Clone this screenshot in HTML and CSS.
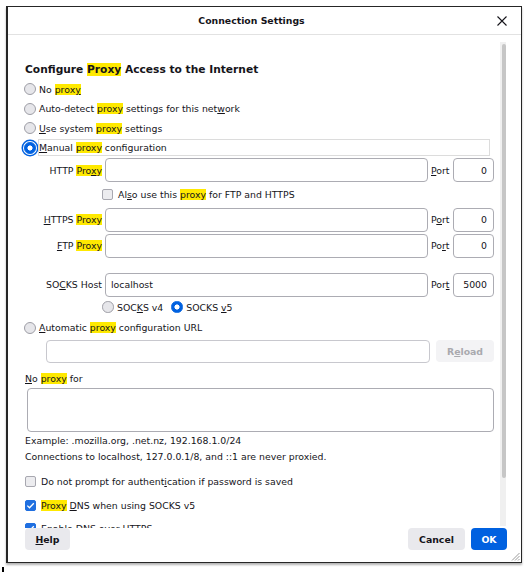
FILE: index.html
```html
<!DOCTYPE html>
<html>
<head>
<meta charset="utf-8">
<link rel="stylesheet" href="styles.css">
</head>
<body>
<div class="dialog">
  <div class="titlebar">
    <div class="title">Connection Settings</div>
    <div class="close"><svg width="10" height="10" viewBox="0 0 10 10"><path d="M0.5 0.5L9.5 9.5M9.5 0.5L0.5 9.5" stroke="#15141a" stroke-width="1.1" fill="none"/></svg></div>
  </div>
  <div class="body">
    <div class="scroll">
      <h1 class="heading">Configure <mark>Proxy</mark> Access to the Internet</h1>
      <div class="opt first"><span class="radio"></span><span>No <mark>prox<u>y</u></mark></span></div>
      <div class="opt"><span class="radio"></span><span>Auto-detect <mark>proxy</mark> settings for this net<u>w</u>ork</span></div>
      <div class="opt"><span class="radio"></span><span><u>U</u>se system <mark>proxy</mark> settings</span></div>
      <div class="opt"><span class="radio checked focus"></span><span class="focusbox"><span><u>M</u>anual <mark>proxy</mark> configuration</span></span></div>

      <div class="field">
        <span class="flabel">HTTP <mark>Pro<u>x</u>y</mark></span>
        <span class="input"></span>
        <span class="plabel"><u>P</u>ort</span>
        <span class="port">0</span>
      </div>
      <div class="subcheck"><span class="check"></span><span>Al<u>s</u>o use this <mark>proxy</mark> for FTP and HTTPS</span></div>
      <div class="field">
        <span class="flabel"><u>H</u>TTPS <mark>Proxy</mark></span>
        <span class="input"></span>
        <span class="plabel">P<u>o</u>rt</span>
        <span class="port">0</span>
      </div>
      <div class="field gap2">
        <span class="flabel"><u>F</u>TP <mark>Proxy</mark></span>
        <span class="input"></span>
        <span class="plabel">Po<u>r</u>t</span>
        <span class="port">0</span>
      </div>
      <div class="field gap15">
        <span class="flabel">SO<u>C</u>KS Host</span>
        <span class="input filled">localhost</span>
        <span class="plabel">Por<u>t</u></span>
        <span class="port">5000</span>
      </div>
      <div class="socksver">
        <span class="radio small"></span><span class="v4">SOC<u>K</u>S v4</span>
        <span class="radio small checked"></span><span>SOCKS <u>v</u>5</span>
      </div>
      <div class="opt auto"><span class="radio"></span><span><u>A</u>utomatic <mark>proxy</mark> configuration URL</span></div>
      <div class="urlrow">
        <span class="urlinput"></span>
        <span class="reload">R<u>e</u>load</span>
      </div>
      <div class="line noproxy"><u>N</u>o <mark>proxy</mark> for</div>
      <div class="textarea"></div>
      <div class="line small2">Example: .mozilla.org, .net.nz, 192.168.1.0/24</div>
      <div class="line small2">Connections to localhost, 127.0.0.1/8, and ::1 are never proxied.</div>
      <div class="cb first-cb"><span class="check"></span><span>Do not prompt for authent<u>i</u>cation if password is saved</span></div>
      <div class="cb"><span class="check on"><svg width="11" height="11" viewBox="0 0 11 11"><path d="M2.3 5.6L4.5 7.8L8.8 3.2" stroke="#fff" stroke-width="1.3" fill="none"/></svg></span><span><mark>Proxy</mark> <u>D</u>NS when using SOCKS v5</span></div>
      <div class="cb last-cb"><span class="check on"><svg width="11" height="11" viewBox="0 0 11 11"><path d="M2.3 5.6L4.5 7.8L8.8 3.2" stroke="#fff" stroke-width="1.3" fill="none"/></svg></span><span>Enable DNS over HTTPS</span></div>
    </div>
    <div class="scrollbar"><div class="thumb"></div></div>
  </div>
  <div class="footer">
    <span class="btn help"><u>H</u>elp</span>
    <span class="spacer"></span>
    <span class="btn cancel">Cancel</span>
    <span class="btn ok">OK</span>
  </div>
  <svg class="grip" width="9" height="9" viewBox="0 0 9 9"><path d="M8.5 1L1 8.5M8.5 4L4 8.5M8.5 7L7 8.5" stroke="#9a9a9a" stroke-width="1" fill="none"/></svg>
</div>
<div class="cursor"></div>
</body>
</html>
```

FILE: styles.css
```css
* { box-sizing: border-box; }
body {
  margin: 0;
  font-family: "DejaVu Sans", sans-serif;
  font-size: 9.33px;
  color: #15141a;
  background: #fff;
}
mark { background: #ffe900; color: inherit; }
u { text-decoration: underline; text-underline-offset: 1px; }

.dialog {
  position: relative;
  margin: 6px 0 0 6px;
  width: 516px;
  height: 557px;
  border: 1px solid #262626;
  border-left-width: 2px;
  display: flex;
  flex-direction: column;
  box-shadow: 0 2px 2px rgba(0,0,0,0.3);
  background: #fff;
}
.titlebar {
  height: 28px;
  flex: none;
  border-bottom: 1px solid #e2e2e2;
  display: flex;
  align-items: center;
}
.title { flex: 1; text-align: center; font-weight: bold; }
.close { width: 14px; margin-right: 12px; display: flex; justify-content: center; }

.body { position: relative; height: 493px; flex: none; overflow: hidden; }
.scroll { padding: 27.5px 0 0 17px; width: 486px; }
.heading { margin: 0; font-size: 10.67px; line-height: 14px; font-weight: bold; }

.opt { display: flex; align-items: center; height: 19.5px; }
.opt.first { margin-top: 3px; }
.opt.auto { height: 20px; }

.radio {
  flex: none;
  width: 12px; height: 12px;
  border-radius: 50%;
  border: 1px solid #9e9ea6;
  background: #e6e6ea;
  margin-left: -1px;
  margin-right: 3px;
}
.radio.checked {
  border-color: #0061e0;
  background: radial-gradient(circle, #fff 0 2.3px, #0061e0 2.8px);
}
.radio.focus { box-shadow: 0 0 0 1px #fff, 0 0 0 2.5px #0061e0; margin-right: 2px; }
.focusbox {
  flex: 1;
  height: 17px;
  margin-right: 4px;
  border: 1px solid #dcdcdc;
  display: flex;
  align-items: center;
}

.field { display: flex; align-items: center; height: 24px; margin-top: 0.5px; }
.field.gap2 { margin-top: 2px; }
.field.gap15 { margin-top: 15px; }
.flabel { width: 77px; text-align: right; white-space: nowrap; }
.input {
  margin-left: 3px;
  width: 323px; height: 24px;
  border: 1px solid #acacb3;
  border-radius: 4px;
  display: flex; align-items: center;
  padding-left: 5px;
}
.plabel { margin-left: 3px; width: 22px; }
.port {
  width: 41px; height: 24px;
  border: 1px solid #acacb3;
  border-radius: 4px;
  display: flex; align-items: center; justify-content: flex-end;
  padding-right: 6px;
}

.subcheck { display: flex; align-items: center; height: 25px; padding-left: 77px; }
.check {
  flex: none;
  width: 11px; height: 11px;
  border: 1px solid #a8a8b0;
  border-radius: 2px;
  background: #ececef;
  margin-right: 5px;
  display: flex;
}
.check.on { background: #1f6fe0; border-color: #1f6fe0; }
.check.on svg { margin: -1px; }

.socksver { display: flex; align-items: center; height: 21px; padding-left: 77px; }
.radio.small { width: 11.5px; height: 11.5px; margin-left: 0; margin-right: 3.5px; }
.v4 { margin-right: 8px; }

.urlrow { display: flex; align-items: center; height: 23px; margin-top: 2px; }
.urlinput {
  margin-left: 21px;
  width: 384px; height: 23px;
  border: 1px solid #c8c8ce;
  border-radius: 4px;
}
.reload {
  margin-left: 6px;
  width: 58px; height: 22px;
  border-radius: 4px;
  background: #f3f3f5;
  color: #a9a9ae;
  font-weight: bold;
  display: flex; align-items: center; justify-content: center;
}

.line { line-height: 14px; margin-top: 2px; }
.noproxy { margin-top: 9px; }
.textarea {
  margin: 2px 0 0 2px;
  width: 467px; height: 44px;
  border: 1px solid #acacb3;
  border-radius: 4px;
}

.cb { display: flex; align-items: center; height: 20px; margin-top: 4px; }
.cb.first-cb { margin-top: 8px; }
.cb.last-cb { margin-top: 3px; }

.scrollbar {
  position: absolute;
  left: 492px; top: 7px;
  width: 6px; height: 484px;
  background: #f0f0f0;
}
.thumb {
  margin: 2px 0 0 2px;
  width: 4px; height: 434px;
  border-radius: 2px;
  background: #c6c6c6;
}

.footer {
  height: 34px;
  flex: none;
  display: flex;
  align-items: flex-start;
  padding: 0 14px 0 17px;
  background: #fff;
}
.spacer { flex: 1; }
.btn {
  height: 22px;
  border-radius: 4px;
  background: #e9e9ed;
  font-weight: bold;
  display: flex; align-items: center; justify-content: center;
}
.help { width: 45px; }
.cancel { width: 57px; }
.ok { width: 36px; margin-left: 6px; background: #0061e0; color: #fff; }

.grip { position: absolute; right: 1px; bottom: 1px; }
.cursor { width: 2px; height: 5px; background: #000; margin: 4px 0 0 2px; }
```
